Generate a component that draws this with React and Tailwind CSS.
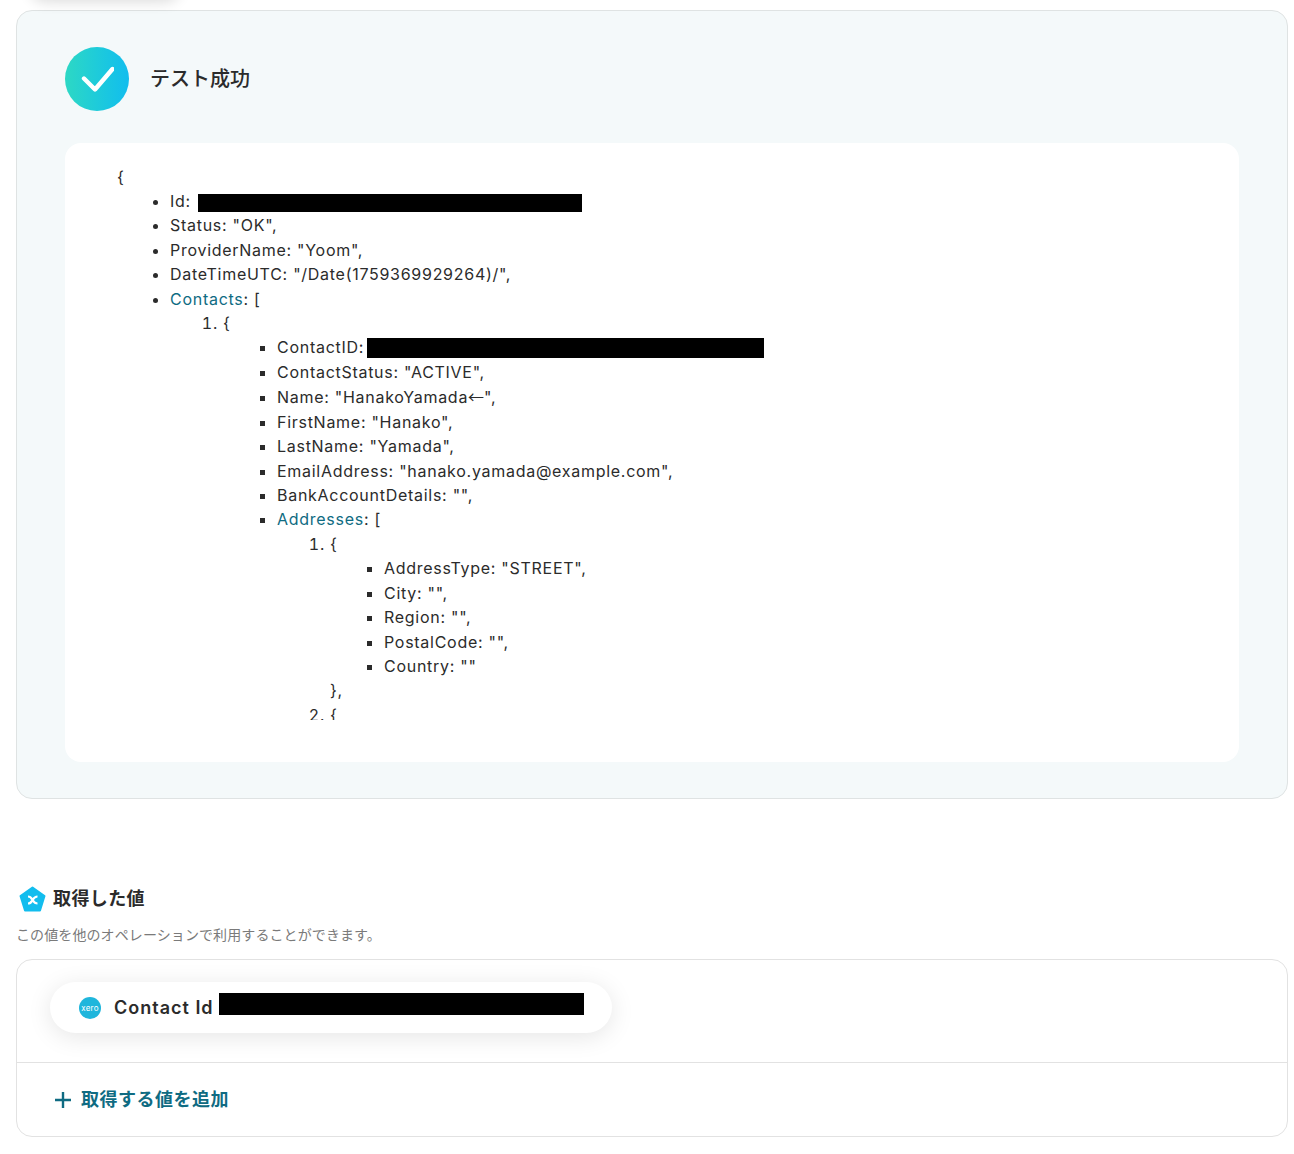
function Redact({ w, h = 18, className = "" }) {
  return <span className={"inline-block bg-black align-middle " + className} style={{ width: w, height: h }} />;
}
function Key({ children }) {
  return <span className="text-[#0f6b82]">{children}</span>;
}

export default function App() {
  return (
    <div className="relative w-[1294px] h-[1154px] overflow-hidden bg-white text-[#2b2b2b] font-['Inter','Noto_Sans_CJK_JP',sans-serif]">
      <div className="absolute left-[30px] top-[-30px] w-[150px] h-[30px] rounded-full shadow-[0_2px_14px_rgba(0,0,0,0.14)]" />
      <div className="pt-[10px] pl-4 pr-[6px]">
        <section className="h-[789px] rounded-2xl border border-[#dfe3e3] bg-[#f4f9fa] pt-9 px-12">
          <div className="flex items-center gap-[21px] h-16">
            <div className="w-16 h-16 rounded-full bg-gradient-to-r from-[#2dd8c4] to-[#12bdee] flex items-center justify-center">
              <svg width="34" height="26" viewBox="0 0 34 26" fill="none">
                <path d="M4 12.5 L15 23.5 L32.5 3" stroke="#fff" strokeWidth="4.4" strokeLinecap="round" strokeLinejoin="round" />
              </svg>
            </div>
            <h2 className="text-xl font-medium leading-none mt-[-1px]">テスト成功</h2>
          </div>
          <div className="mt-8 h-[619px] rounded-2xl bg-white pt-[21.5px] pl-[52px] pr-8">
            <div className="h-[555.5px] overflow-hidden text-base leading-[24.42px] tracking-[0.72px]">
              <div>{"{"}</div>
              <ul className="list-disc pl-[53px]">
                <li>Id: <Redact w={384} className="ml-[2px]" /></li>
                <li>Status: "OK",</li>
                <li>ProviderName: "Yoom",</li>
                <li>DateTimeUTC: "/Date(1759369929264)/",</li>
                <li><Key>Contacts</Key>: [
                  <ol className="list-decimal pl-[53px]">
                    <li>{"{"}
                      <ul className="list-[square] pl-[54px]">
                        <li>ContactID: <Redact w={397} h={20} className="-ml-[2px] -translate-y-px" /></li>
                        <li>ContactStatus: "ACTIVE",</li>
                        <li>Name: "HanakoYamada<span className="font-['Noto_Sans_CJK_JP'] tracking-normal">←</span>",</li>
                        <li>FirstName: "Hanako",</li>
                        <li>LastName: "Yamada",</li>
                        <li>EmailAddress: "hanako.yamada@example.com",</li>
                        <li>BankAccountDetails: "",</li>
                        <li><Key>Addresses</Key>: [
                          <ol className="list-decimal pl-[53px]">
                            <li>{"{"}
                              <ul className="list-[square] pl-[54px]">
                                <li>AddressType: "STREET",</li>
                                <li>City: "",</li>
                                <li>Region: "",</li>
                                <li>PostalCode: "",</li>
                                <li>Country: ""</li>
                              </ul>
                              {"},"}
                            </li>
                            <li>{"{"}</li>
                          </ol>
                        </li>
                      </ul>
                    </li>
                  </ol>
                </li>
              </ul>
            </div>
          </div>
        </section>

        <div className="mt-[86px] flex items-center gap-[7px] pl-[3px] h-7">
          <svg width="27" height="27" viewBox="0 0 27 27">
            <path d="M13.5 1.5 L25.5 10 L21 24.5 H6 L1.5 10 Z" fill="#12bdee" stroke="#12bdee" strokeWidth="2" strokeLinejoin="round" />
            <path d="M9 10.5 C12 10.5 12.5 12.5 13.5 14 C14.5 15.5 15.5 17.5 18.5 17.5 M18.5 10.5 C15.5 10.5 14.5 12.5 13.5 14 C12.5 15.5 12 17.5 9 17.5" stroke="#fff" strokeWidth="2.2" fill="none" />
          </svg>
          <h3 className="text-lg font-semibold leading-none tracking-[0.4px]">取得した値</h3>
        </div>
        <p className="mt-3 text-sm leading-5 tracking-[0.1px] text-[#7a7a7a]">この値を他のオペレーションで利用することができます。</p>
        <div className="mt-[14px] h-[178px] rounded-2xl border border-[#e2e2e2] overflow-hidden">
          <div className="h-[102px] pt-[22px] pl-[33px]">
            <div className="flex items-center w-[562px] h-[51px] rounded-full bg-white pl-[29px] shadow-[0_4px_24px_rgba(0,0,0,0.1)]">
              <span className="w-[22px] h-[22px] rounded-full bg-[#1fb6dc] flex items-center justify-center text-[8px] leading-none tracking-[0.2px] text-white">xero</span>
              <span className="ml-[13px] text-lg font-semibold tracking-[1px]">Contact Id</span>
              <Redact w={365} h={22} className="ml-[5px] -mt-[8px]" />
            </div>
          </div>
          <div className="h-[74px] border-t border-[#e2e2e2] flex items-center pl-9 text-[#0f6b82]">
            <svg width="20" height="20" viewBox="0 0 20 20" className="mr-2">
              <path d="M10 2 V18 M2 10 H18" stroke="#0f6b82" strokeWidth="2.4" />
            </svg>
            <span className="text-lg font-semibold tracking-[0.5px]">取得する値を追加</span>
          </div>
        </div>
      </div>
    </div>
  );
}
